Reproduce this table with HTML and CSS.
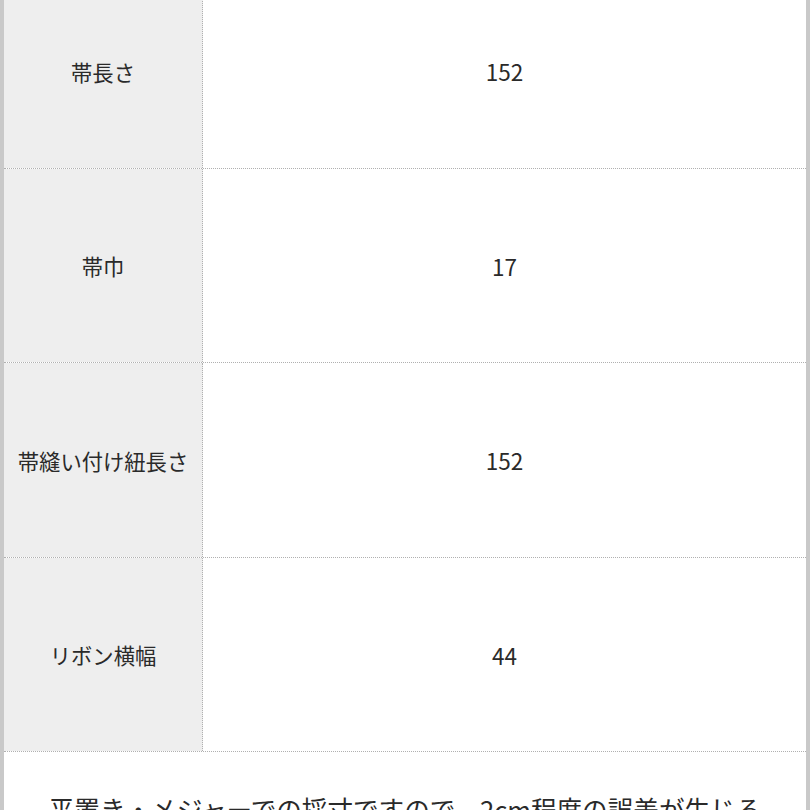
FILE: index.html
```html
<!DOCTYPE html>
<html lang="ja">
<head>
<meta charset="utf-8">
<link rel="stylesheet" href="styles.css">
</head>
<body>
<div class="frame">
  <div class="spec">
    <div class="row">
      <div class="label">帯長さ</div>
      <div class="value">152</div>
    </div>
    <div class="row">
      <div class="label">帯巾</div>
      <div class="value">17</div>
    </div>
    <div class="row">
      <div class="label">帯縫い付け紐長さ</div>
      <div class="value">152</div>
    </div>
    <div class="row">
      <div class="label">リボン横幅</div>
      <div class="value">44</div>
    </div>
    <div class="note">平置き・メジャーでの採寸ですので、2cm程度の誤差が生じる場合がございます。</div>
  </div>
</div>
</body>
</html>
```

FILE: styles.css
```css
html, body {
  margin: 0;
  padding: 0;
  background: #ffffff;
  overflow: hidden;
}
body {
  width: 810px;
  height: 810px;
  font-family: "Noto Sans CJK JP", "Liberation Sans", sans-serif;
  color: #2a2a2a;
}
.frame {
  width: 810px;
  height: 810px;
  box-sizing: border-box;
  border-left: 4px solid #c9c9c9;
  border-right: 4px solid #c9c9c9;
  overflow: hidden;
}
.spec {
  margin-top: -25.3px;
}
.row {
  display: grid;
  grid-template-columns: 199px 1fr;
  height: 194.4px;
  box-sizing: border-box;
  border-bottom: 1px dotted #b0b0b0;
}
.label {
  background: #eeeeee;
  border-right: 1px dotted #b0b0b0;
  display: flex;
  align-items: center;
  justify-content: center;
  font-size: 21.3px;
  white-space: nowrap;
}
.value {
  display: flex;
  align-items: center;
  justify-content: center;
  font-size: 22.5px;
}
.note {
  padding: 37px 40px 0;
  text-align: center;
  font-size: 25.6px;
  line-height: 1.6;
}
```
